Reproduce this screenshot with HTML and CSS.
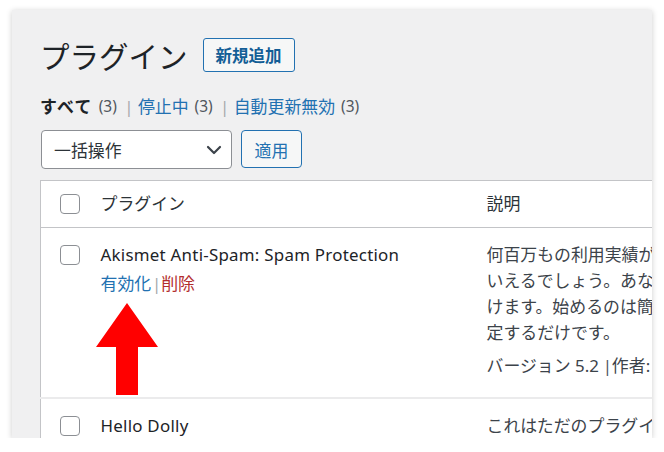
FILE: index.html
```html
<!DOCTYPE html>
<html lang="ja">
<head>
<meta charset="utf-8">
<title>プラグイン</title>
<link rel="stylesheet" href="styles.css">
</head>
<body>
<div class="shot">
  <div class="wrap">
    <div class="page-head">
      <h1 class="page-title">プラグイン</h1>
      <a class="btn-add" href="#">新規追加</a>
    </div>
    <ul class="subsubsub">
      <li class="current"><span class="label">すべて</span><span class="count">(3)</span></li>
      <li class="sep">|</li>
      <li><a href="#">停止中</a><span class="count">(3)</span></li>
      <li class="sep">|</li>
      <li><a href="#">自動更新無効</a><span class="count">(3)</span></li>
    </ul>
    <div class="tablenav">
      <div class="select">
        <span>一括操作</span>
        <svg class="chev" width="16" height="10" viewBox="0 0 16 10"><path d="M2 2 L8 8 L14 2" fill="none" stroke="#3c434a" stroke-width="2.2" stroke-linecap="round" stroke-linejoin="round"/></svg>
      </div>
      <a class="btn-apply" href="#">適用</a>
    </div>
    <table class="plugins">
      <thead>
        <tr>
          <th class="col-cb"><input type="checkbox" class="cb"></th>
          <th class="col-name">プラグイン</th>
          <th class="col-desc">説明</th>
        </tr>
      </thead>
      <tbody>
        <tr class="row-first">
          <td class="col-cb"><input type="checkbox" class="cb"></td>
          <td class="col-name">
            <div class="plugin-title">Akismet Anti-Spam: Spam Protection</div>
            <div class="row-actions"><a href="#" class="act">有効化</a><span class="bar">|</span><a href="#" class="del">削除</a></div>
          </td>
          <td class="col-desc">
            <p class="desc">何百万もの利用実績がある Akismet は、ブログをスパムから保護する最良の方法と<br>いえるでしょう。あなたが寝ている間もサイトを保護し続<br>けます。始めるのは簡単です。Akismet プラグインを有効化して API キーを設<br>定するだけです。</p>
            <p class="meta">バージョン 5.2<span class="pipe">|</span>作者: <a href="#">Automattic - Anti-spam Team</a> | <a href="#">詳細を表示</a></p>
          </td>
        </tr>
        <tr class="row-second">
          <td class="col-cb"><input type="checkbox" class="cb"></td>
          <td class="col-name">
            <div class="plugin-title">Hello Dolly</div>
          </td>
          <td class="col-desc">
            <p class="desc">これはただのプラグインではありません。</p>
          </td>
        </tr>
      </tbody>
    </table>
  </div>
  <svg class="arrow" width="62" height="92" viewBox="0 0 62 92"><polygon points="31,0 62,44 42,44 42,92 20,92 20,44 0,44" fill="#ff0000"/></svg>
</div>
</body>
</html>
```

FILE: styles.css
```css
* { box-sizing: border-box; }

html, body {
  margin: 0;
  padding: 0;
  background: #ffffff;
}

body {
  font-family: "Noto Sans", "Noto Sans CJK JP", sans-serif;
  font-size: 16.9px;
  color: #3c434a;
}

a { text-decoration: none; color: #2271b1; }

.shot {
  position: relative;
  margin: 10px 0 0 12px;
  width: 640px;
  height: 428px;
  background: #f0f0f1;
  overflow: hidden;
  box-shadow: 0 1px 6px rgba(0, 0, 0, 0.2);
}

.wrap {
  padding: 28px 0 0 28px;
}

.page-head {
  display: flex;
  align-items: center;
  gap: 15px;
  height: 34px;
}

.page-title {
  margin: 0;
  font-size: 29.5px;
  font-weight: 400;
  color: #1d2327;
  line-height: 34px;
  font-family: "Noto Sans CJK JP", sans-serif;
}

.btn-add {
  display: flex;
  align-items: center;
  justify-content: center;
  width: 92px;
  height: 34px;
  border: 1px solid #2271b1;
  border-radius: 3px;
  background: #f6f7f7;
  color: #135e96;
  font-weight: 700;
  font-size: 16.5px;
  font-family: "Noto Sans CJK JP", sans-serif;
}

.subsubsub {
  list-style: none;
  margin: 23px 0 0 0;
  padding: 0;
  display: flex;
  align-items: center;
  height: 23px;
  line-height: 23px;
  color: #646970;
}

.subsubsub li { display: flex; align-items: center; }

.subsubsub .current {
  color: #1d2327;
  font-weight: 700;
}

.subsubsub .current .label { letter-spacing: 1.3px; }
.subsubsub .current .count { font-weight: 400; }

.subsubsub .count {
  color: #50575e;
  font-size: 15.5px;
  margin-left: 6px;
}

.subsubsub .sep {
  color: #a7aaad;
  width: 4px;
  justify-content: center;
  margin: 0 7px 0 10px;
}

.tablenav {
  display: flex;
  gap: 9px;
  margin-top: 12px;
  height: 39px;
}

.select {
  margin-left: 1px;
  width: 191px;
  height: 39px;
  border: 1px solid #8c8f94;
  border-radius: 4px;
  background: #ffffff;
  display: flex;
  align-items: center;
  justify-content: space-between;
  padding: 0 9px 0 12px;
  color: #2c3338;
}

.chev { display: block; }

.btn-apply {
  width: 61px;
  height: 38px;
  border: 1px solid #2271b1;
  border-radius: 4px;
  background: #f6f7f7;
  display: flex;
  align-items: center;
  justify-content: center;
  color: #2271b1;
}

.plugins {
  margin-top: 11px;
  width: 720px;
  border-collapse: collapse;
  border: 1px solid #c3c4c7;
  background: #ffffff;
  table-layout: fixed;
}

.plugins th,
.plugins td {
  padding: 0;
  text-align: left;
  font-weight: 400;
}

.plugins thead th {
  height: 47px;
  border-bottom: 1px solid #c3c4c7;
  vertical-align: middle;
  color: #2c3338;
  line-height: 26px;
}

.col-cb { width: 60px; padding-left: 19px !important; }
.col-name { width: 386px; }
.col-desc { width: auto; }

.cb {
  -webkit-appearance: none;
  appearance: none;
  display: block;
  margin: 0;
  width: 20px;
  height: 20px;
  border: 1px solid #8c8f94;
  border-radius: 4px;
  background: #ffffff;
}

.plugins tbody td {
  vertical-align: top;
  line-height: 26px;
}

.row-first td {
  padding-top: 14px;
  padding-bottom: 18px;
}

.row-second td {
  padding-top: 14px;
  border-top: 2px solid #ebebec;
}

.plugins tbody .col-cb .cb { margin-top: 3px; }

.plugin-title {
  color: #1d2327;
  white-space: nowrap;
  letter-spacing: 0.25px;
}

.row-actions {
  margin-top: 3px;
  white-space: nowrap;
  display: flex;
  align-items: center;
}

.row-actions .act { color: #2271b1; }
.row-actions .del { color: #b32d2e; }
.row-actions .bar {
  color: #a7aaad;
  display: inline-flex;
  justify-content: center;
  width: 5px;
  margin: 0 2px 0 3px;
}

.desc,
.meta {
  margin: 0;
  white-space: nowrap;
  color: #3c434a;
}

.meta { margin-top: 7px; }
.meta .pipe {
  color: #50575e;
  display: inline-block;
  width: 5px;
  text-align: center;
  margin: 0 4px 0 4px;
}

.arrow {
  position: absolute;
  left: 84px;
  top: 293px;
}
```
